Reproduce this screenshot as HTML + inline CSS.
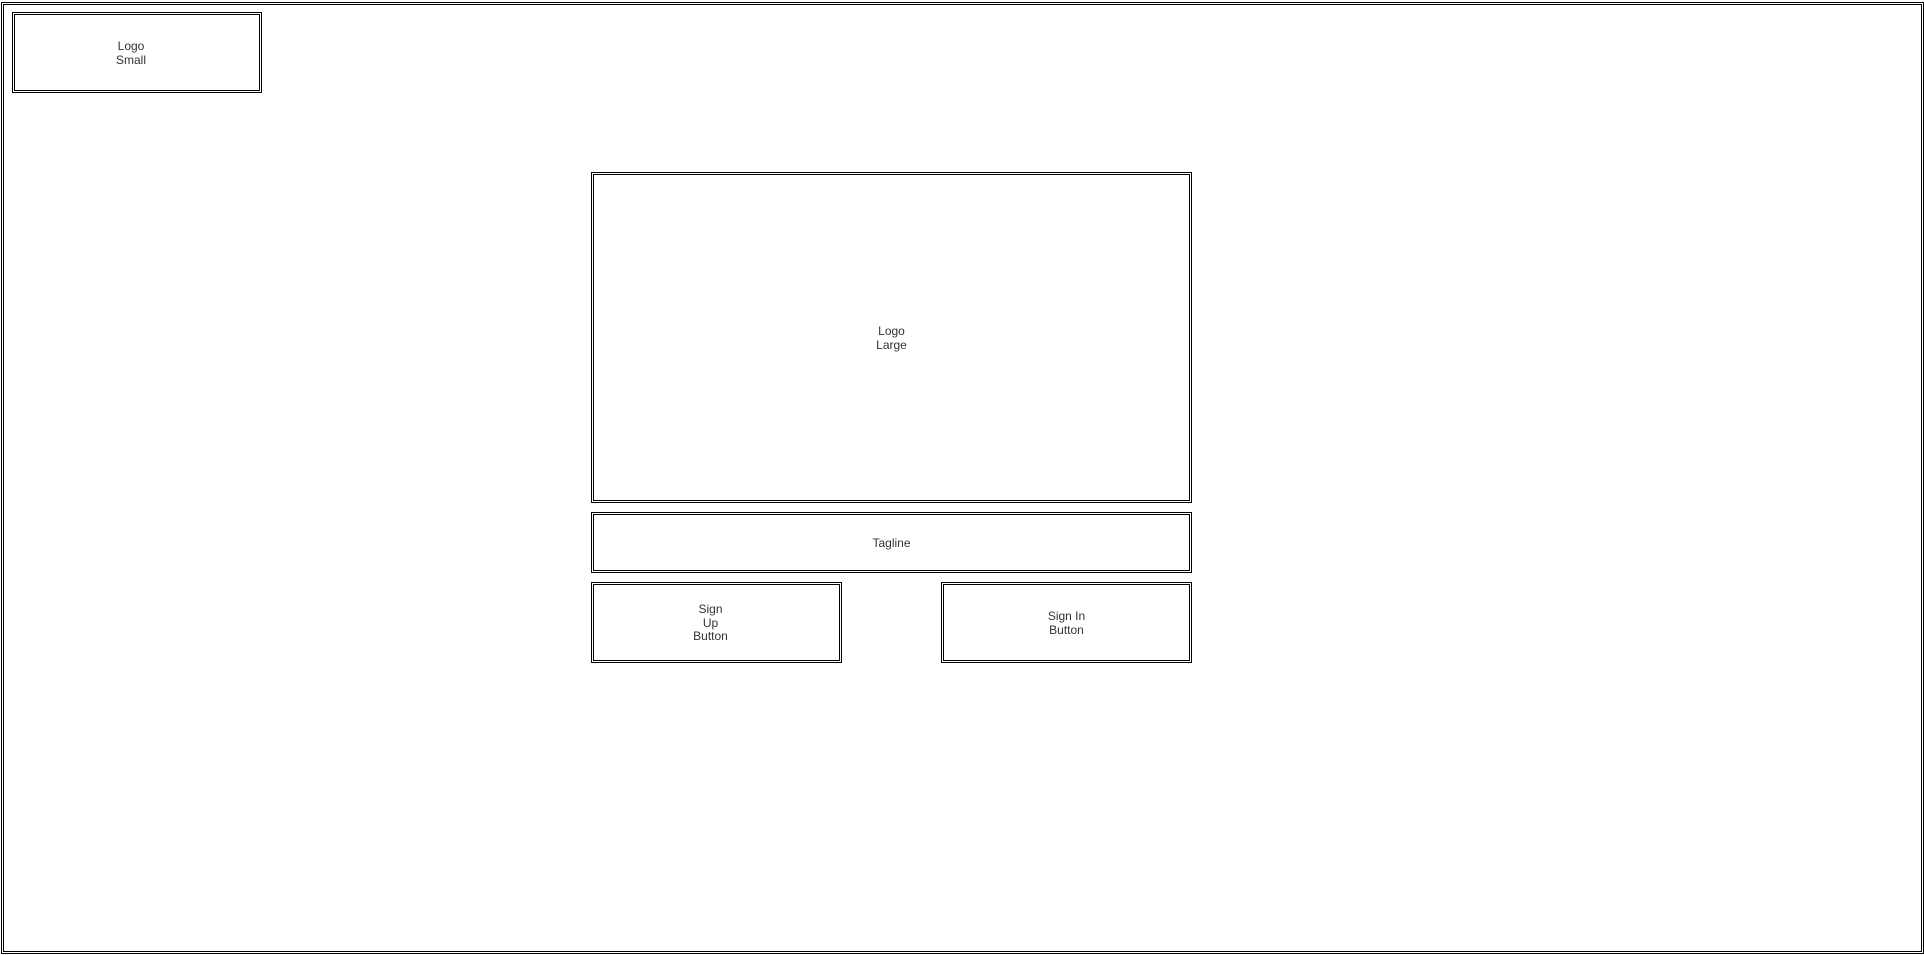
<!DOCTYPE html>
<html><head><meta charset="utf-8"><style>
html,body{margin:0;padding:0;background:#fff;width:1924px;height:955px;overflow:hidden;}
.b{position:absolute;box-sizing:border-box;border:3px double #000;display:flex;align-items:center;justify-content:center;text-align:center;font-family:"Liberation Sans",Arial,sans-serif;font-size:12px;line-height:13.5px;color:#333;padding-top:2px;}
</style></head><body>
<div class="b" style="left:1px;top:2px;width:1923px;height:952px;"></div>
<div class="b" style="left:12px;top:12px;width:250px;height:81px;padding-right:12px;">Logo<br>Small</div>
<div class="b" style="left:591px;top:172px;width:601px;height:331px;">Logo<br>Large</div>
<div class="b" style="left:591px;top:512px;width:601px;height:61px;">Tagline</div>
<div class="b" style="left:591px;top:582px;width:251px;height:81px;padding-right:12px;">Sign<br>Up<br>Button</div>
<div class="b" style="left:941px;top:582px;width:251px;height:81px;">Sign In<br>Button</div>
</body></html>
